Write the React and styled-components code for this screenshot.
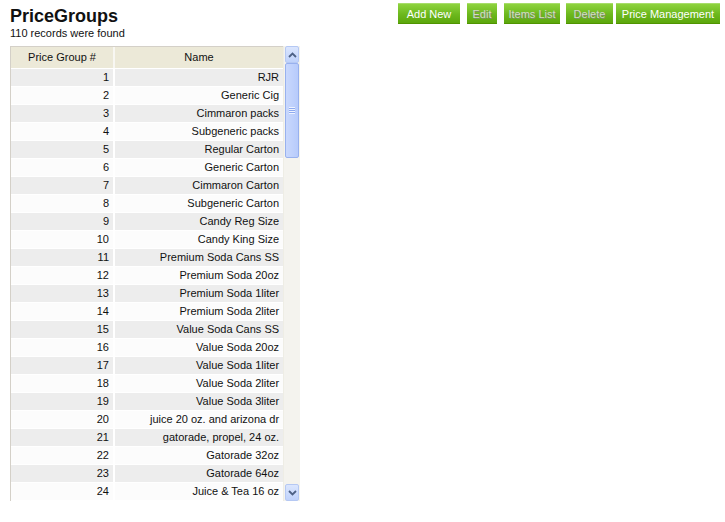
import React from "react";
import styled, { createGlobalStyle } from "styled-components";

const rows = [
  [1, "RJR"],
  [2, "Generic Cig"],
  [3, "Cimmaron packs"],
  [4, "Subgeneric packs"],
  [5, "Regular Carton"],
  [6, "Generic Carton"],
  [7, "Cimmaron Carton"],
  [8, "Subgeneric Carton"],
  [9, "Candy Reg Size"],
  [10, "Candy King Size"],
  [11, "Premium Soda Cans SS"],
  [12, "Premium Soda 20oz"],
  [13, "Premium Soda 1liter"],
  [14, "Premium Soda 2liter"],
  [15, "Value Soda Cans SS"],
  [16, "Value Soda 20oz"],
  [17, "Value Soda 1liter"],
  [18, "Value Soda 2liter"],
  [19, "Value Soda 3liter"],
  [20, "juice 20 oz. and arizona dr"],
  [21, "gatorade, propel, 24 oz."],
  [22, "Gatorade 32oz"],
  [23, "Gatorade 64oz"],
  [24, "Juice & Tea 16 oz"],
];

// widths and gaps read off the screenshot
const buttons = [
  { label: "Add New", w: 62, gap: 7 },
  { label: "Edit", w: 30, gap: 7, disabled: true },
  { label: "Items List", w: 56, gap: 6, disabled: true },
  { label: "Delete", w: 47, gap: 3, disabled: true },
  { label: "Price Management", w: 104, gap: 0 },
];

const App = () => {
  return (
    <>
      <GlobalStyle />
      <Page>
        <Top>
          <TitleBlock>
            <Title>PriceGroups</Title>
            <Count>110 records were found</Count>
          </TitleBlock>
          <Toolbar>
            {buttons.map((b) => (
              <Button
                key={b.label}
                disabled={b.disabled}
                $off={b.disabled}
                $w={b.w}
                $gap={b.gap}
              >
                {b.label}
              </Button>
            ))}
          </Toolbar>
        </Top>
        <Grid>
          <TableArea>
            <HeadRow>
              <HeadCell>Price Group #</HeadCell>
              <HeadCell>Name</HeadCell>
            </HeadRow>
            {rows.map(([id, name], i) => (
              <Row key={id} $odd={i % 2 === 0}>
                <Cell>{id}</Cell>
                <Cell>{name}</Cell>
              </Row>
            ))}
          </TableArea>
          <Scrollbar>
            <ScrollButton>
              <svg width="9" height="6" viewBox="0 0 9 6">
                <path d="M1 5 L4.5 1.5 L8 5" fill="none" stroke="#4d6185" strokeWidth="1.8" />
              </svg>
            </ScrollButton>
            <Track>
              <Thumb>
                <Grip />
              </Thumb>
            </Track>
            <ScrollButton>
              <svg width="9" height="6" viewBox="0 0 9 6">
                <path d="M1 1 L4.5 4.5 L8 1" fill="none" stroke="#4d6185" strokeWidth="1.8" />
              </svg>
            </ScrollButton>
          </Scrollbar>
        </Grid>
      </Page>
    </>
  );
};

export default App;

const GlobalStyle = createGlobalStyle`
  body {
    margin: 0;
    background: #ffffff;
    font-family: "Liberation Sans", Arial, sans-serif;
    color: #000;
  }
`;

const Page = styled.div`
  padding: 3px 5px 0 10px;
`;

const Top = styled.div`
  display: flex;
  justify-content: space-between;
  align-items: flex-start;
`;

const TitleBlock = styled.div`
  display: flex;
  flex-direction: column;
`;

const Title = styled.h1`
  margin: 3px 0 0;
  font-size: 18px;
  line-height: 20px;
  font-weight: bold;
  color: #111;
`;

const Count = styled.div`
  font-size: 11px;
  line-height: 14px;
  color: #111;
`;

const Toolbar = styled.div`
  display: flex;
`;

const Button = styled.button`
  width: ${(p) => p.$w}px;
  margin-right: ${(p) => p.$gap}px;
  height: 21px;
  padding: 0;
  border: none;
  border-top: 1px solid #a7dd6a;
  border-bottom: 1px solid #4f9400;
  background: linear-gradient(#8ed33e, #6cb81d 55%, #5ca70c);
  font-family: "Liberation Sans", Arial, sans-serif;
  font-size: 11px;
  white-space: nowrap;
  color: ${(p) => (p.$off ? "#d3dcc6" : "#ffffff")};
  text-shadow: ${(p) => (p.$off ? "1px 1px 0 #7f8f6c" : "none")};
  cursor: pointer;
  &:disabled {
    cursor: default;
  }
`;

const Grid = styled.div`
  display: flex;
  width: 290px;
  height: 455px;
  margin-top: 6px;
  overflow: hidden;
`;

const TableArea = styled.div`
  width: 273px;
  border-left: 1px solid #d4d0c8;
  display: flex;
  flex-direction: column;
`;

const HeadRow = styled.div`
  display: grid;
  grid-template-columns: 102px 1fr;
  height: 22px;
  flex-shrink: 0;
  background: #ece9d8;
  border-top: 1px solid #d4d0c8;
  box-sizing: border-box;
`;

const HeadCell = styled.div`
  font-size: 11px;
  line-height: 21px;
  text-align: center;
  color: #111;
  & + & {
    border-left: 2px solid #f8f7f2;
  }
`;

const Row = styled.div`
  display: grid;
  grid-template-columns: 102px 1fr;
  height: 18px;
  flex-shrink: 0;
  box-sizing: border-box;
  border-top: 1px solid #ffffff;
  background: ${(p) => (p.$odd ? "#ededed" : "#fcfcfc")};
`;

const Cell = styled.div`
  font-size: 11px;
  line-height: 17px;
  text-align: right;
  padding-right: 4px;
  white-space: nowrap;
  overflow: hidden;
  color: #111;
  & + & {
    border-left: 2px solid #ffffff;
  }
`;

const Scrollbar = styled.div`
  width: 17px;
  display: flex;
  flex-direction: column;
  background: #f4f3ee;
  border-left: 1px solid #eeede5;
  box-sizing: border-box;
`;

const ScrollButton = styled.div`
  height: 17px;
  flex-shrink: 0;
  margin: 0 1px;
  border: 1px solid #b5c8f3;
  border-radius: 2px;
  box-sizing: border-box;
  background: linear-gradient(#dbe6fe, #bfd2fb);
  display: flex;
  align-items: center;
  justify-content: center;
`;

const Track = styled.div`
  flex: 1;
  padding: 0 1px;
`;

const Thumb = styled.div`
  height: 95px;
  border: 1px solid #98b1ee;
  border-radius: 2px;
  box-sizing: border-box;
  background: linear-gradient(90deg, #c9d8fd, #b7cbfb);
  display: flex;
  align-items: center;
  justify-content: center;
`;

const Grip = styled.div`
  width: 6px;
  height: 7px;
  background: repeating-linear-gradient(#eef3ff 0 1px, #8eaaf0 1px 2px);
`;
